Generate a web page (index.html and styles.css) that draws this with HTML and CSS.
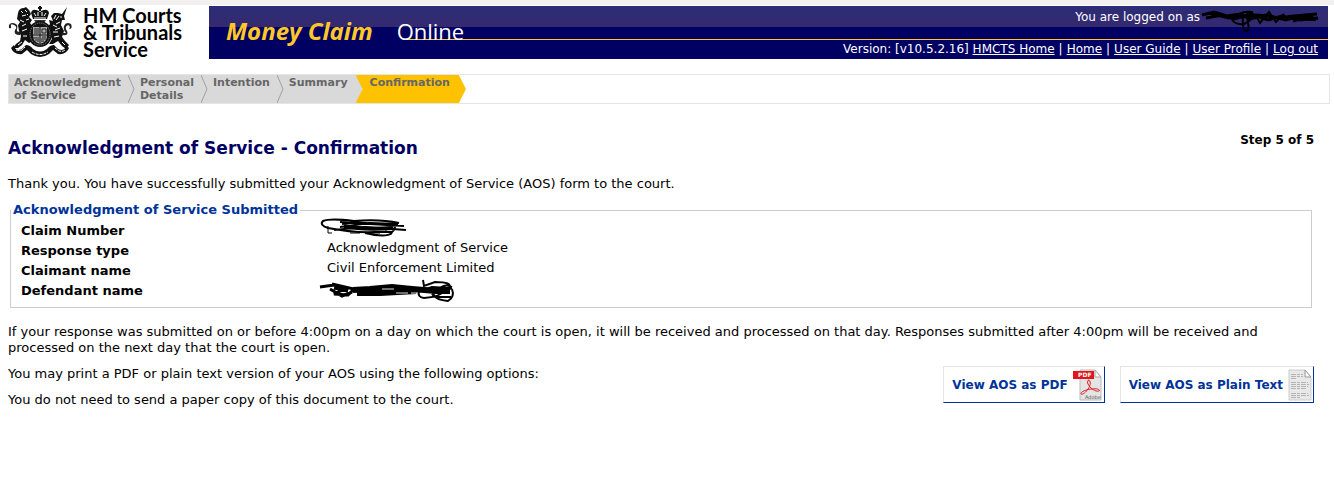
FILE: index.html
```html
<!DOCTYPE html>
<html lang="en">
<head>
  <meta charset="UTF-8" />
  <title>Money Claim Online - Acknowledgment of Service</title>
  <link rel="stylesheet" href="styles.css">
</head>
<body>
  <div class="top-strip"></div>

  <header class="header">
    <div class="logo">
      <svg class="crest" viewBox="0 0 64 52" width="64" height="52" aria-hidden="true">
        <!-- crown -->
        <path d="M25 13 L23 7 Q24 3 28 4 Q30 4 32 6 Q34 4 36 4 Q40 3 41 7 L39 13 Z" fill="#111"/>
        <path d="M31 0h2v1h1v2h-1v2h-2v-2h-1v-2h1z" fill="#111"/>
        <path d="M26 7l2 3M30 6v4M34 6v4M38 7l-2 3M26 12h12" stroke="#fff" stroke-width="1" fill="none"/>
        <path d="M26 14h12l-2 3h-8z" fill="#333"/>
        <!-- lion -->
        <path d="M10 7 Q11 2 16 2 L18 1 L21 4 L23 8 L21 11 L24 14 L22 17 L25 21 L22 25 L22 31 L25 35 L21 37 L17 34 L14 39 L10 42 L5 42 L8 38 L12 35 L13 30 L11 25 L10 19 L12 16 L9 13 Z" fill="#111"/>
        <path d="M12 29 Q5 29 7 24 Q10 21 6 19 Q2 17 3 20 Q4 23 1 22 Q0 17 5 17 Q11 18 9 23 Q8 26 12 26" fill="#222"/>
        <path d="M13 5l2 2M17 4l2 2M14 10l4-1M12 14l4 2M18 14l3-1M14 20l4-2M14 25l5-2M15 30l4 0M10 39l4-3M19 8l1 1" stroke="#fff" stroke-width="1" fill="none"/>
        <!-- unicorn -->
        <path d="M54 8 L59 1 L56 10 L57 14 L54 14 L53 19 L56 25 L54 31 L57 35 L61 39 L58 43 L54 40 L50 35 L45 38 L41 38 L44 33 L42 28 L39 22 L42 18 L41 14 L45 15 L43 10 L46 7 L50 7 Z" fill="#111"/>
        <path d="M54 29 Q61 30 59 25 Q56 21 60 19 Q63 20 61 23 Q65 23 63 18 Q58 15 56 20 Q55 24 58 27 L54 27" fill="#222"/>
        <path d="M48 9l-2 4M51 10l-3 4M52 16l-4 2M45 19l4 2M52 22l-5 2M45 26l5 0M51 30l-5 1M54 36l3 3M53 10v2" stroke="#fff" stroke-width="1" fill="none"/>
        <!-- shield in garter -->
        <ellipse cx="32" cy="28" rx="12" ry="13" fill="#111"/>
        <ellipse cx="32" cy="28" rx="10" ry="11" fill="none" stroke="#999" stroke-dasharray="1 1"/>
        <path d="M25 21h14v9q0 6-7 8q-7-2-7-8z" fill="#aaa"/>
        <path d="M32 21v17M25 29h14" stroke="#111" stroke-width="1"/>
        <path d="M26 23h5M26 25h5M26 27h5M34 31h4M33 33h5M33 35h3" stroke="#222"/>
        <path d="M34 23h4v4h-4zM28 31v4M30 31v5M26 31v2" fill="none" stroke="#222"/>
        <!-- motto ribbon -->
        <path d="M6 39 Q7 46 14 43 L18 39 Q22 39 25 43 Q32 48 39 43 Q42 39 46 39 L50 43 Q57 46 58 39 L61 42 Q58 49 50 48 L45 44 L41 48 Q32 54 23 48 L19 44 L14 48 Q6 49 3 42 Z" fill="#111"/>
        <path d="M8 44q4 1 6 0l3-3M24 46q8 5 16 0M47 42l4 3q4 1 6-1" stroke="#fff" fill="none" stroke-width="1" stroke-dasharray="3 1"/>
      </svg>
      <div class="logo-text">HM Courts<br>&amp; Tribunals<br>Service</div>
    </div>
    <div class="banner">
      <div class="brand"><span class="brand-name">Money Claim</span><span class="brand-online">Online</span></div>
      <div class="user-area">
        <div class="logged-on">You are logged on as
          <svg class="user-mark" viewBox="0 0 116 28" width="116" height="28" aria-hidden="true">
            <path d="M0 9L12 6L25 10L38 8L48 13L64 9L76 12L92 10L115 8M4 12L20 9L32 13L49 8L66 14L80 10L98 14L116 12M7 7L27 12L40 11L56 9L72 11L84 14L102 9M91 15L108 10L114 14" stroke-width="3"/>
            <path d="M30 14Q38 4 50 6Q54 12 42 18Q34 19 30 14M41 6Q40 22 43 25Q48 26 46 17L45 5M53 8L58 17L67 6L74 16L82 8" stroke-width="2"/>
          </svg>
        </div>
        <nav class="links">
          <span>Version: [v10.5.2.16]</span>
          <a href="#">HMCTS Home</a><i>|</i><a href="#">Home</a><i>|</i><a href="#">User Guide</a><i>|</i><a href="#">User Profile</a><i>|</i><a href="#">Log out</a>
        </nav>
      </div>
    </div>
  </header>

  <ol class="steps">
    <li>Acknowledgment<br>of Service<svg class="arrow" viewBox="0 0 7 28" width="7" height="28"><path d="M0 0L6 14L0 28"/></svg></li>
    <li>Personal<br>Details<svg class="arrow" viewBox="0 0 7 28" width="7" height="28"><path d="M0 0L6 14L0 28"/></svg></li>
    <li>Intention<svg class="arrow" viewBox="0 0 7 28" width="7" height="28"><path d="M0 0L6 14L0 28"/></svg></li>
    <li>Summary</li>
    <li class="current">Confirmation</li>
  </ol>

  <main class="content">
    <div class="title-row">
      <h1>Acknowledgment of Service - Confirmation</h1>
      <div class="step-count">Step 5 of 5</div>
    </div>

    <p>Thank you. You have successfully submitted your Acknowledgment of Service (AOS) form to the court.</p>

    <fieldset>
      <legend>Acknowledgment of Service Submitted</legend>
      <dl>
        <dt>Claim Number</dt>
        <dd>
          <svg class="mark" viewBox="0 0 88 20" width="88" height="20" aria-hidden="true">
            <path d="M8 6V13H12M30 13H40M50 13H60M66 8V13" stroke-width="1"/>
            <path d="M79 3Q60 -1 34 1Q10 -2 3 1Q-1 5 8 8Q34 13 55 12L72 12Q80 5 66 5Q40 1 22 4M20 2L50 4L84 6M14 10L45 7L86 10M20 7L50 3L78 4M45 13Q66 18 72 13" stroke-width="2"/>
            <path d="M24 6Q42 10 73 8" stroke-width="4"/>
          </svg>
        </dd>
        <dt>Response type</dt>
        <dd>Acknowledgment of Service</dd>
        <dt>Claimant name</dt>
        <dd>Civil Enforcement Limited</dd>
        <dt>Defendant name</dt>
        <dd>
          <svg class="mark" viewBox="0 0 136 24" width="136" height="24" aria-hidden="true">
            <path d="M0 7L14 5L25 9L14 14L28 15L34 9L12 4M10 9L22 16L32 12M14 8L28 11" stroke-width="3"/>
            <path d="M33 10L50 9L72 7L92 9L116 11L130 11" stroke-width="6"/>
            <path d="M37 13L60 13L96 11" stroke-width="6"/>
            <path d="M103 0L104 6L115 2Q133 2 129 8L112 7L99 11Q97 17 104 18Q120 17 124 11L132 8M112 14Q116 20 128 21Q135 17 132 9M117 8Q110 13 116 17L131 17M119 9Q125 3 132 7" stroke-width="2"/>
            <path d="M62 9H74M76 13H88M91 13H96" stroke="#ddd" stroke-width="1"/>
          </svg>
        </dd>
      </dl>
    </fieldset>

    <p>If your response was submitted on or before 4:00pm on a day on which the court is open, it will be received and processed on that day. Responses submitted after 4:00pm will be received and processed on the next day that the court is open.</p>

    <div class="options">
      <div>
        <p>You may print a PDF or plain text version of your AOS using the following options:</p>
        <p>You do not need to send a paper copy of this document to the court.</p>
      </div>
      <div class="buttons">
        <button type="button">View AOS as PDF
          <svg viewBox="0 0 30 32" width="30" height="32" aria-hidden="true">
            <path d="M7 1H22L28 8V31H7Z" fill="#e4e4e4" stroke="#bbb"/>
            <path d="M22 1V8H28Z" fill="#fafafa" stroke="#aaa"/>
            <path d="M0 2H21V10H0Z" fill="#e2161a"/>
            <text x="5" y="8" class="pdf-label">PDF</text>
            <path d="M15 11C18 11 18 16 15 20C13 23 10 26 8 25C7 23 14 20 19 20C24 19 28 21 26 22C22 23 17 19 15 15C14 13 14 11 16 12" fill="none" stroke="#dc2020" stroke-width="1"/>
            <text x="12" y="30" class="adobe-label">Adobe</text>
          </svg>
        </button>
        <button type="button">View AOS as Plain Text
          <svg viewBox="0 0 24 32" width="24" height="32" aria-hidden="true">
            <path d="M1 1H17L23 8V31H1Z" fill="#e8e8e8" stroke="#ccc"/>
            <path d="M17 1V8H23Z" fill="#fafafa" stroke="#999"/>
            <path d="M3 5.5H15M3 7.5H15M3 9.5H9M3 13.5H20M3 15.5H21M3 17.5H20M3 19.5H19M3 24.5H20M3 26.5H21M3 28.5H13" stroke="#b4b4b4" stroke-dasharray="5 1 3 1"/>
          </svg>
        </button>
      </div>
    </div>
  </main>
</body>
</html>
```
FILE: styles.css
```css
body {
  margin: 0;
  background: #fff;
  color: #000;
  font-family: Verdana, "DejaVu Sans", sans-serif;
  font-size: 13px;
  line-height: 16px;
}

.top-strip {
  height: 5px;
  background: #f2f1f0;
}

.header {
  display: flex;
  margin: 1px 6px 0 0;
}

.logo {
  display: flex;
  gap: 11px;
  width: 201px;
  padding-left: 8px;
  height: 53px;
}

.logo-text {
  padding-top: 1px;
  font-family: Lato, sans-serif;
  font-size: 20px;
  font-weight: bold;
  line-height: 17px;
  white-space: nowrap;
}

.banner {
  flex: 1;
  display: flex;
  justify-content: space-between;
  color: #fff;
  background:
    linear-gradient(#fc3, #fc3) 195px 33px / 100% 1px no-repeat,
    linear-gradient(#2b2d77, #36296f) 0 0 / 100% 21px no-repeat,
    #000063;
}

.brand {
  display: flex;
  gap: 24px;
  padding: 8px 0 0 17px;
  font-family: "Open Sans", sans-serif;
  font-size: 24px;
  line-height: 34px;
}

.brand-name {
  color: #ffc828;
  font-weight: bold;
  font-style: italic;
}

.brand-online {
  font-size: 22px;
}

.user-area {
  padding-right: 10px;
  text-align: right;
  font-size: 12px;
}

.logged-on {
  position: relative;
  padding: 3px 118px 0 0;
}

.user-mark {
  position: absolute;
  top: 0;
  right: 0;
}

.user-mark,
.mark {
  fill: none;
  stroke: #000;
  overflow: visible;
}

.links {
  padding-top: 16px;
}

.links a {
  color: #fff;
}

.links i {
  padding: 0 4px;
  font-style: normal;
}

.steps {
  display: flex;
  list-style: none;
  margin: 15px 4px 0 8px;
  padding: 0;
  border: 1px solid #e5e5e5;
  font-size: 11px;
  font-weight: bold;
  line-height: 13px;
  color: #666;
}

.steps li {
  position: relative;
  min-height: 28px;
  padding: 1px 14px 0 5px;
  box-sizing: border-box;
  background: #d9d9d9;
}

.arrow {
  position: absolute;
  top: 0;
  right: 0;
  fill: none;
  stroke: #a0a0a0;
}

.steps .current {
  padding: 1px 16px 0 14px;
  margin-left: -6px;
  background: #ffc200;
  clip-path: polygon(0 0, calc(100% - 7px) 0, 100% 50%, calc(100% - 7px) 100%, 0 100%, 7px 50%);
}

.content {
  padding: 28px 20px 0 8px;
}

.title-row {
  display: flex;
  justify-content: space-between;
}

h1 {
  margin: 6px 0 0;
  font-size: 17px;
  line-height: 20px;
  color: #000063;
}

.step-count {
  font-size: 12px;
  font-weight: bold;
}

p {
  margin: 0 0 10px;
}

.title-row + p {
  margin: 18px 0 10px;
}

fieldset {
  margin: 0 2px 16px;
  padding: 2px 10px 7px;
  border: 1px solid #ccc;
}

legend {
  margin-left: -10px;
  padding: 0 2px;
  font-weight: bold;
  color: #039;
}

dl {
  display: grid;
  grid-template-columns: 306px 1fr;
  grid-auto-rows: 20px;
  margin: 0;
}

dt {
  padding-top: 3px;
  font-weight: bold;
}

dd {
  position: relative;
  margin: 0;
}

.mark {
  position: absolute;
  top: 0;
  left: -7px;
}

.options {
  display: flex;
  justify-content: space-between;
}

.buttons {
  display: flex;
  gap: 15px;
}

button {
  display: flex;
  align-items: center;
  gap: 5px;
  height: 37px;
  margin: 0;
  padding: 0 1px 0 8px;
  border: 1px solid #039;
  border-top-color: #e5e5e5;
  border-left-color: #e5e5e5;
  background: #fff;
  color: #039;
  font-family: inherit;
  font-size: 12px;
  font-weight: bold;
  white-space: nowrap;
  cursor: pointer;
}

.pdf-label {
  font-size: 6px;
  fill: #fff;
}

.adobe-label {
  font-size: 5px;
  font-weight: normal;
  fill: #555;
}
```
